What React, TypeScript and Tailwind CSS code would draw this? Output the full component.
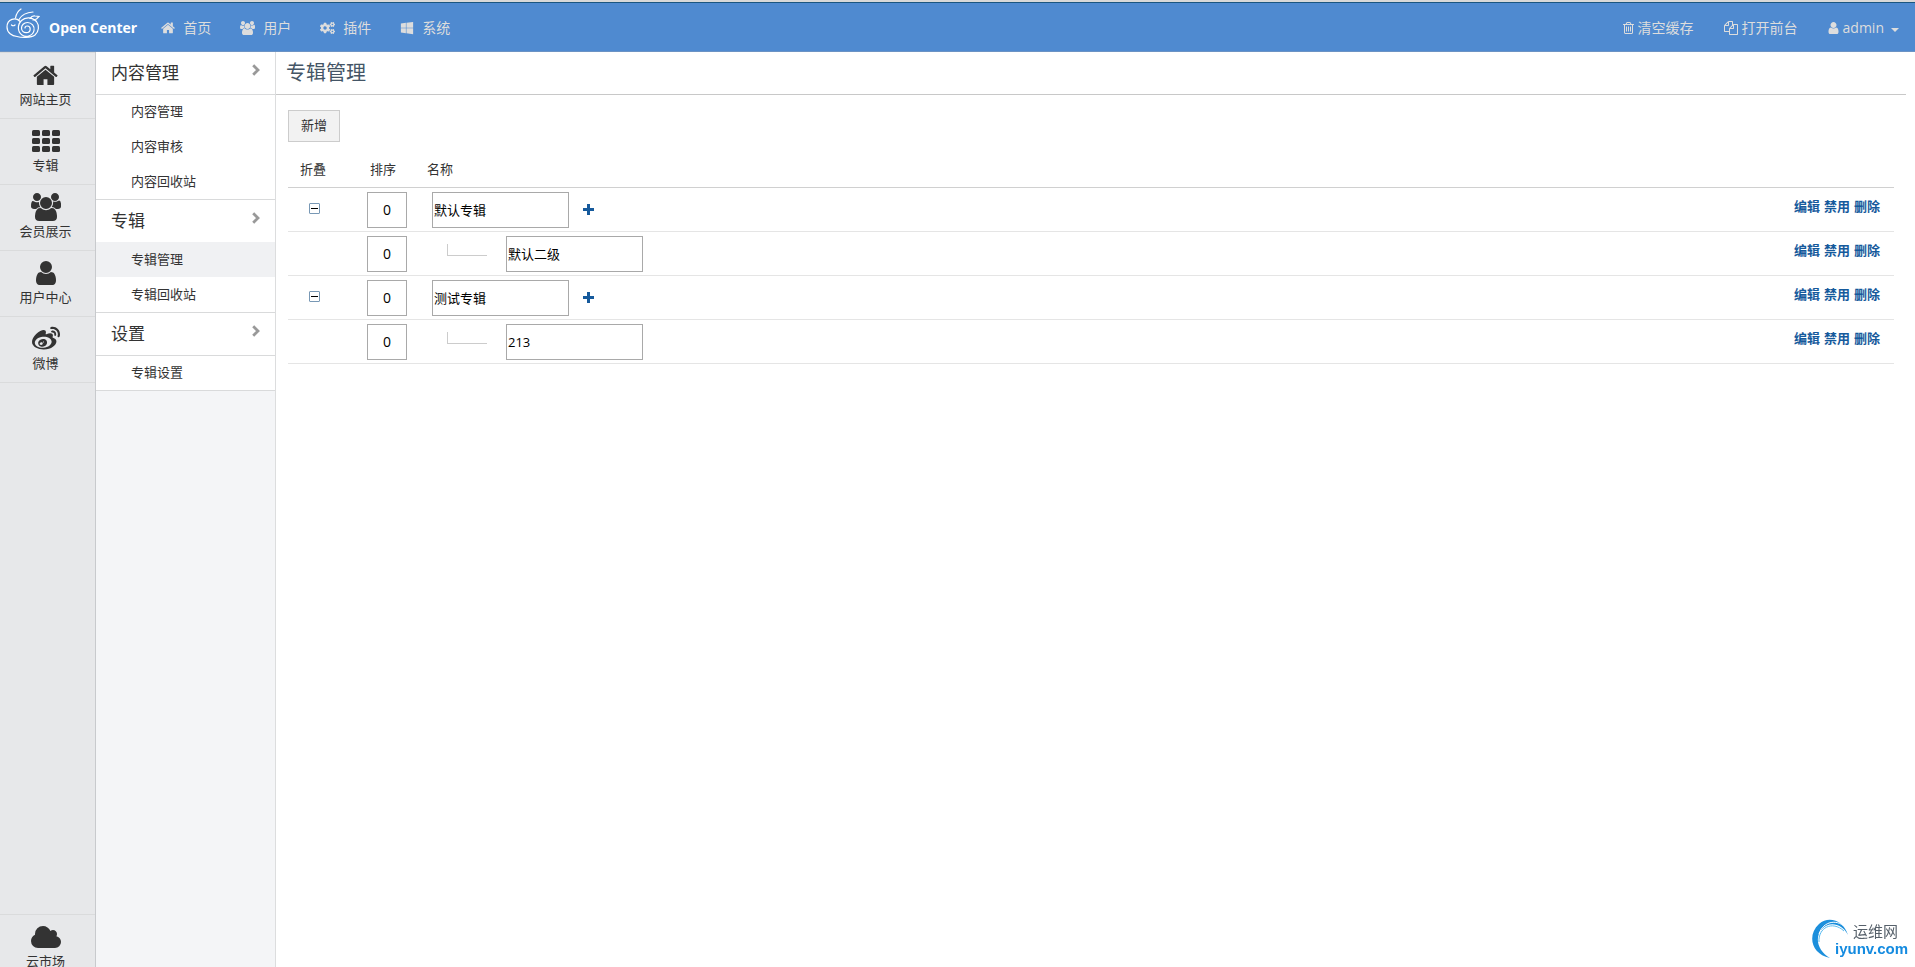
import React, { useState } from "react";
import clsx from "clsx";
import { FaCogs, FaWeibo, FaWindows } from "react-icons/fa";

type IconProps = {
  className?: string;
};

type Album = {
  id: number;
  sort: string;
  name: string;
  child?: boolean;
};

type MenuGroup = {
  title: string;
  items: string[];
};

const menus: MenuGroup[] = [
  { title: "内容管理", items: ["内容管理", "内容审核", "内容回收站"] },
  { title: "专辑", items: ["专辑管理", "专辑回收站"] },
  { title: "设置", items: ["专辑设置"] },
];

const initialAlbums: Album[] = [
  { id: 1, sort: "0", name: "默认专辑" },
  { id: 2, sort: "0", name: "默认二级", child: true },
  { id: 3, sort: "0", name: "测试专辑" },
  { id: 4, sort: "0", name: "213", child: true },
];

const HomeIcon: React.FC<IconProps> = ({ className }) => (
  <svg viewBox="64 200 1664 1400" fill="currentColor" className={className}>
    <path d="M1472 992v480q0 26-19 45t-45 19h-384v-384h-256v384h-384q-26 0-45-19t-19-45v-480q0-1 .5-3t.5-3l575-474 575 474q1 2 1 6zm223-69l-62 74q-8 9-21 11h-3q-13 0-21-7l-692-577-692 577q-12 8-24 7-13-2-21-11l-62-74q-8-10-7-23.5t11-21.5l719-599q32-26 76-26t76 26l244 204v-195q0-14 9-23t23-9h192q14 0 23 9t9 23v408l219 182q10 8 11 21.5t-7 23.5z" />
  </svg>
);

const UsersIcon: React.FC<IconProps> = ({ className }) => (
  <svg viewBox="0 0 1920 1792" fill="currentColor" className={className}>
    <path d="M593 896q-162 5-265 128h-134q-82 0-138-40.5t-56-118.5q0-353 124-353 6 0 43.5 21t97.5 42.5 119 21.5q67 0 133-23-5 37-5 66 0 159 90 287zm1071 637q0 120-73 189.5t-194 69.5h-874q-121 0-194-69.5t-73-189.5q0-53 3.5-103.5t14-109 26.5-108.5 43-97.5 62-81 85.5-53.5 111.5-20q10 0 43 21.5t73 48 107 48 135 21.5 135-21.5 107-48 73-48 43-21.5q61 0 111.5 20t85.5 53.5 62 81 43 97.5 26.5 108.5 14 109 3.5 103.5zm-1024-1277q0 106-75 181t-181 75-181-75-75-181 75-181 181-75 181 75 75 181zm704 384q0 159-112.5 271.5t-271.5 112.5-271.5-112.5-112.5-271.5 112.5-271.5 271.5-112.5 271.5 112.5 112.5 271.5zm576 225q0 78-56 118.5t-138 40.5h-134q-103-123-265-128 90-128 90-287 0-29-5-66 66 23 133 23 59 0 119-21.5t97.5-42.5 43.5-21q124 0 124 353zm-128-609q0 106-75 181t-181 75-181-75-75-181 75-181 181-75 181 75 75 181z" />
  </svg>
);

const UserIcon: React.FC<IconProps> = ({ className }) => (
  <svg viewBox="256 128 1280 1536" fill="currentColor" className={className}>
    <path d="M1536 1399q0 109-62.5 187t-150.5 78h-854q-88 0-150.5-78t-62.5-187q0-85 8.5-160.5t31.5-152 58.5-131 94-89 134.5-34.5q131 128 313 128t313-128q76 0 134.5 34.5t94 89 58.5 131 31.5 152 8.5 160.5zm-256-887q0 159-112.5 271.5t-271.5 112.5-271.5-112.5-112.5-271.5 112.5-271.5 271.5-112.5 271.5 112.5 112.5 271.5z" />
  </svg>
);

const CloudIcon: React.FC<IconProps> = ({ className }) => (
  <svg viewBox="64 128 1920 1408" fill="currentColor" className={className}>
    <path d="M1984 1152q0 159-112.5 271.5t-271.5 112.5h-1088q-185 0-316.5-131.5t-131.5-316.5q0-132 71-241.5t187-163.5q-2-28-2-43 0-212 150-362t362-150q158 0 286.5 88t187.5 230q70-62 166-62 106 0 181 75t75 181q0 75-41 138 129 30 213 134.5t84 239.5z" />
  </svg>
);

const GridIcon: React.FC<IconProps> = ({ className }) => (
  <svg viewBox="0 0 28 22" fill="currentColor" className={className}>
    {[0, 8, 16].map((y) =>
      [0, 10, 20].map((x) => (
        <rect key={`${x}-${y}`} x={x} y={y} width="8" height="6" rx="1.5" />
      ))
    )}
  </svg>
);

const TrashIcon: React.FC<IconProps> = ({ className }) => (
  <svg viewBox="192 128 1408 1536" fill="currentColor" className={className}>
    <path d="M704 736v576q0 14-9 23t-23 9h-64q-14 0-23-9t-9-23v-576q0-14 9-23t23-9h64q14 0 23 9t9 23zm256 0v576q0 14-9 23t-23 9h-64q-14 0-23-9t-9-23v-576q0-14 9-23t23-9h64q14 0 23 9t9 23zm256 0v576q0 14-9 23t-23 9h-64q-14 0-23-9t-9-23v-576q0-14 9-23t23-9h64q14 0 23 9t9 23zm128 724v-948h-896v948q0 22 7 40.5t14.5 27 10.5 8.5h832q3 0 10.5-8.5t14.5-27 7-40.5zm-672-1076h448l-48-117q-7-9-17-11h-317q-10 2-17 11zm928 32v64q0 14-9 23t-23 9h-96v948q0 83-47 143.5t-113 60.5h-832q-66 0-113-58.5t-47-141.5v-952h-96q-14 0-23-9t-9-23v-64q0-14 9-23t23-9h309l70-167q15-37 54-63t79-26h320q40 0 79 26t54 63l70 167h309q14 0 23 9t9 23z" />
  </svg>
);

const FilesIcon: React.FC<IconProps> = ({ className }) => (
  <svg viewBox="0 0 1792 1792" fill="currentColor" className={className}>
    <path d="M1696 384q40 0 68 28t28 68v1216q0 40-28 68t-68 28h-960q-40 0-68-28t-28-68v-288h-544q-40 0-68-28t-28-68v-672q0-40 20-88t48-76l408-408q28-28 76-48t88-20h416q40 0 68 28t28 68v328q68-40 128-40h416zm-544 213l-299 299h299v-299zm-640-384l-299 299h299v-299zm196 647l316-316v-416h-384v416q0 40-28 68t-68 28h-416v640h512v-256q0-40 20-88t48-76zm956 804v-1152h-384v416q0 40-28 68t-68 28h-416v640h896z" />
  </svg>
);

const ChevronIcon: React.FC<IconProps> = ({ className }) => (
  <svg viewBox="0 0 8 12" fill="none" className={className}>
    <path d="M1.2 1.2L6 6l-4.8 4.8" stroke="currentColor" strokeWidth="2.8" />
  </svg>
);

const SnailLogo: React.FC<IconProps> = ({ className }) => (
  <svg
    viewBox="0 0 34 32"
    fill="none"
    stroke="currentColor"
    strokeWidth="1.2"
    strokeLinecap="round"
    className={className}
  >
    <path d="M9.500 11Q10.500 5 15 2" />
    <path d="M13 12.500Q17 5.500 27 5" />
    <path d="M13.500 14C10 10 1 11.500 1 20c0 6 5 9 10 9.500 4 1.300 14 1.700 18-1.500 4-3.500 4.500-9.500 1.500-13.500-4-4.500-11-5-15-1-4.500 4.500-4 11.500.5 14.500 4.500 3 11 .5 12-4.500 1-4.500-2.500-8-6.500-8-3.700 0-6 2.800-6 5.500 0 3 2.300 4.700 4.700 4.700 2.500 0 4-1.700 4-3.700 0-1.800-1.300-3-3-3-1.200 0-2.200.8-2.200 2" />
    <path d="M5.500 18q1.700 1.500 3.500 0M24 11.500q2-3 5-2.500l4 .5-2.500 2.500-3.500 1" />
  </svg>
);

const SiteMark = () => (
  <div className="fixed right-1 bottom-1 flex h-[46px] w-[100px] items-start">
    <svg viewBox="0 0 38 42" fill="none" className="h-[42px] w-[38px] shrink-0">
      <path
        d="M37 18C33 4 18-2 8 7-4 18 0 37 19 41 7 34 3 21 11 12 18 4 31 6 37 18z"
        fill="#1c8fdc"
      />
      <path d="M8 17C12 4 27 1 36 12" stroke="#fff" strokeWidth="1" />
      <path d="M8 25C7 11 21 3 33 14" stroke="#5bbcf0" strokeWidth="1" />
    </svg>
    <div className="-ml-3.5 flex-1 pt-[2px]">
      <p className="pl-[18px] text-[15px] leading-6 text-[#56606a]">运维网</p>
      <p className="font-[Liberation_Sans] text-[15px] leading-3 font-bold text-[#148be0]">
        iyunv.com
      </p>
    </div>
  </div>
);

type RailItemProps = {
  label: string;
  children: React.ReactNode;
};

const RailItem: React.FC<RailItemProps> = ({ label, children }) => (
  <a
    href="#"
    className="flex h-[66px] shrink-0 flex-col items-center border-t border-[#dadbdc] pt-2 pr-1 text-[13px] leading-5 text-[#333]"
  >
    <span className="flex h-7 items-center">{children}</span>
    {label}
  </a>
);

const App = () => {
  const [albums, setAlbums] = useState<Album[]>(initialAlbums);
  const [active, setActive] = useState("专辑管理");

  const update = (id: number, value: Partial<Album>) => {
    setAlbums(albums.map((a) => (a.id === id ? { ...a, ...value } : a)));
  };

  return (
    <div className="flex h-screen flex-col overflow-hidden bg-white font-['Open_Sans','Noto_Sans_CJK_SC',sans-serif] text-[13px] text-[#333]">
      <header className="flex h-[52px] shrink-0 items-center border-t-2 border-b border-t-[#d8d8d8] border-b-[#6b93c4] bg-[#4f8ad0] text-sm text-[#ddd] shadow-[inset_0_1px_0_#1b5680]">
        <a href="#" className="flex items-center pl-1.5 text-white">
          <SnailLogo className="mb-2 h-8 w-[34px]" />
          <span className="pt-0.5 pl-[9px] font-bold">Open Center</span>
        </a>
        <nav className="flex flex-1 gap-[29px] pt-0.5 pl-6">
          <a href="#" className="flex items-center gap-2">
            <HomeIcon className="h-3 w-3.5" />
            首页
          </a>
          <a href="#" className="flex items-center gap-2">
            <UsersIcon className="h-3.5 w-[15px]" />
            用户
          </a>
          <a href="#" className="flex items-center gap-2">
            <FaCogs className="h-3.5 w-[15px]" />
            插件
          </a>
          <a href="#" className="flex items-center gap-2">
            <FaWindows className="h-3.5 w-3.5" />
            系统
          </a>
        </nav>
        <nav className="flex gap-[30px] pt-0.5 pr-4">
          <a href="#" className="flex items-center gap-1">
            <TrashIcon className="h-3 w-[11px]" />
            清空缓存
          </a>
          <a href="#" className="flex items-center gap-1">
            <FilesIcon className="h-3.5 w-3.5" />
            打开前台
          </a>
          <a href="#" className="flex items-center gap-1">
            <UserIcon className="h-3 w-[11px]" />
            admin
            <span className="mt-1 ml-[3px] border-x-4 border-t-4 border-x-transparent border-t-[#ddd]" />
          </a>
        </nav>
      </header>

      <div className="flex min-h-0 flex-1">
        <aside className="flex w-24 shrink-0 flex-col justify-between border-r border-[#c8cacd] bg-[#e7e8ea]">
          <div className="border-b border-[#dadbdc]">
            <RailItem label="网站主页">
              <HomeIcon className="h-[21px] w-[25px]" />
            </RailItem>
            <RailItem label="专辑">
              <GridIcon className="h-[22px] w-7" />
            </RailItem>
            <RailItem label="会员展示">
              <UsersIcon className="h-7 w-[30px]" />
            </RailItem>
            <RailItem label="用户中心">
              <UserIcon className="h-6 w-[22px]" />
            </RailItem>
            <RailItem label="微博">
              <FaWeibo className="h-7 w-7" />
            </RailItem>
          </div>
          <div className="h-[53px]">
            <RailItem label="云市场">
              <CloudIcon className="h-[22px] w-[30px]" />
            </RailItem>
          </div>
        </aside>

        <aside className="w-[180px] shrink-0 border-r border-[#dcddde] bg-[#f4f5f7]">
          {menus.map((menu) => (
            <section
              key={menu.title}
              className="border-b border-[#d9dadb] bg-white"
            >
              <h3 className="flex h-[42px] items-center justify-between pr-[15px] pl-[15px] text-[17px]">
                {menu.title}
                <ChevronIcon className="mb-1.5 h-3 w-2 text-[#999]" />
              </h3>
              <ul>
                {menu.items.map((item, i) => (
                  <li
                    key={item}
                    className={clsx(
                      "h-[35px]",
                      i === 0 && "border-t",
                      item === active && menu.title === "专辑"
                        ? "border-[#f0f1f3] bg-[#f0f1f3]"
                        : "border-[#d9dadb]"
                    )}
                  >
                    <a
                      href="#"
                      className="flex h-full items-center pl-[35px]"
                      onClick={() => setActive(item)}
                    >
                      {item}
                    </a>
                  </li>
                ))}
              </ul>
            </section>
          ))}
        </aside>

        <main className="min-w-0 flex-1 pr-[9px]">
          <h1 className="flex h-[43px] items-center border-b border-[#c8c8c8] pl-2.5 text-xl text-[#456]">
            专辑管理
          </h1>
          <div className="pt-[15px] pr-3 pl-3">
            <button
              type="button"
              className="h-8 w-[52px] border border-[#ccc] bg-[#f2f2f2]"
            >
              新增
            </button>
            <table className="mt-2.5 w-full table-fixed border-collapse">
              <thead>
                <tr className="h-[35px] border-b border-[#d0d0d0] text-left">
                  <th className="w-[79px] pl-3 font-normal">折叠</th>
                  <th className="w-[60px] pl-[3px] font-normal">排序</th>
                  <th className="font-normal">名称</th>
                  <th className="w-[120px]" />
                </tr>
              </thead>
              <tbody>
                {albums.map((album) => (
                  <tr key={album.id} className="h-11 border-b border-[#e5e5e5]">
                    <td className="pb-0.5 pl-[21px]">
                      {!album.child && (
                        <button
                          type="button"
                          aria-label="折叠"
                          className="flex h-[11px] w-[11px] items-center justify-center rounded-[1px] border border-[#7898b5]"
                        >
                          <span className="h-px w-[7px] bg-black" />
                        </button>
                      )}
                    </td>
                    <td className="pt-px">
                      <input
                        aria-label="排序"
                        className="block h-9 w-10 border border-[#a9a9a9] text-center text-sm text-black"
                        value={album.sort}
                        onChange={(e) =>
                          update(album.id, { sort: e.target.value })
                        }
                      />
                    </td>
                    <td className="pt-px">
                      <div className="flex items-center pl-[5px]">
                        {album.child && (
                          <span className="mr-[19px] mb-2 ml-[15px] h-3 w-10 border-b border-l border-[#ccc]" />
                        )}
                        <input
                          aria-label="名称"
                          className="h-9 w-[137px] border border-[#a9a9a9] px-px text-[13px] text-black"
                          value={album.name}
                          onChange={(e) =>
                            update(album.id, { name: e.target.value })
                          }
                        />
                        {!album.child && (
                          <button
                            type="button"
                            aria-label="新增"
                            className="ml-3.5 text-[#165a9c]"
                          >
                            <svg
                              viewBox="0 0 11 11"
                              fill="currentColor"
                              className="h-[11px] w-[11px]"
                            >
                              <path d="M4 0h3v4h4v3H7v4H4V7H0V4h4z" />
                            </svg>
                          </button>
                        )}
                      </div>
                    </td>
                    <td className="pr-3.5 pb-1">
                      <div className="flex justify-end gap-1 font-bold text-[#165a9c]">
                        <a href="#">编辑</a>
                        <a href="#">禁用</a>
                        <a href="#">删除</a>
                      </div>
                    </td>
                  </tr>
                ))}
              </tbody>
            </table>
          </div>
        </main>
      </div>
      <SiteMark />
    </div>
  );
};

export default App;
